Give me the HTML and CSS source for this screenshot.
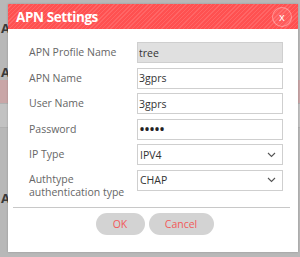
FILE: index.html
```html
<!DOCTYPE html>
<html lang="en">
<head>
    <meta charset="UTF-8">
    <meta name="viewport" content="width=device-width, initial-scale=1.0">
    <title>APN Settings</title>
    <link rel="stylesheet" href="styles.css">
</head>
<body>
    <!-- page behind the dialog, dimmed -->
    <div class="page">
        <h2 class="section-title">A</h2>
        <h2 class="section-title second">A</h2>
        <div class="table">
            <div class="table-row selected"></div>
            <div class="table-row"></div>
        </div>
        <h2 class="section-title third">A</h2>
    </div>

    <div class="modal">
        <div class="modal-header">
            <h1>APN Settings</h1>
            <button class="close-btn">x</button>
        </div>

        <div class="modal-body">
            <div class="form">
                <label>APN Profile Name</label>
                <input class="field" type="text" value="tree" disabled>

                <label>APN Name</label>
                <input class="field" type="text" value="3gprs">

                <label>User Name</label>
                <input class="field" type="text" value="3gprs">

                <label>Password</label>
                <input class="field" type="password" value="12345">

                <label>IP Type</label>
                <div class="field select">
                    <span>IPV4</span>
                    <svg width="9" height="6" viewBox="0 0 9 6"><path d="M1 1l3.5 3.5L8 1" fill="none" stroke="#555" stroke-width="1.1"/></svg>
                </div>

                <label>Authtype<br>authentication type</label>
                <div class="field select">
                    <span>CHAP</span>
                    <svg width="9" height="6" viewBox="0 0 9 6"><path d="M1 1l3.5 3.5L8 1" fill="none" stroke="#555" stroke-width="1.1"/></svg>
                </div>
            </div>

            <div class="divider"></div>

            <div class="actions">
                <button class="btn btn-ok">OK</button>
                <button class="btn btn-cancel">Cancel</button>
            </div>
        </div>
    </div>
</body>
</html>
```
FILE: styles.css
```css
* {
    box-sizing: border-box;
    margin: 0;
    padding: 0;
}

body {
    font-family: 'Open Sans', 'Noto Sans', sans-serif;
    background-color: #b8b8b8;
    width: 300px;
    height: 257px;
    overflow: hidden;
    position: relative;
}

/* Background page */
.page {
    padding-top: 20px;
}

.section-title {
    font-size: 13px;
    font-weight: bold;
    color: #3a3a3a;
    padding-left: 1px;
    line-height: 16px;
}

.section-title.second {
    margin-top: 28px;
}

.section-title.third {
    margin-top: 62px;
}

.table-row {
    height: 24px;
    background-color: #c2c2c2;
    border-bottom: 1px solid #b0b0b0;
}

.table-row.selected {
    background-color: #c9a6a7;
}

/* Dialog */
.modal {
    position: absolute;
    left: 8px;
    top: 4px;
    width: 290px;
    height: 248px;
    background-color: #fff;
    box-shadow: 0 0 2px rgba(0, 0, 0, 0.2);
}

.modal-header {
    height: 25px;
    display: flex;
    align-items: center;
    justify-content: space-between;
    padding: 0 6px 0 8px;
    background-color: #ff5151;
    background-image: repeating-linear-gradient(
        -45deg,
        rgba(255, 255, 255, 0.12) 0,
        rgba(255, 255, 255, 0.12) 1px,
        rgba(0, 0, 0, 0) 1px,
        rgba(0, 0, 0, 0) 3px
    );
}

.modal-header h1 {
    font-size: 13.5px;
    font-weight: bold;
    color: #fff;
    letter-spacing: -0.4px;
}

.close-btn {
    width: 20px;
    height: 20px;
    border-radius: 50%;
    border: 1px solid rgba(255, 255, 255, 0.35);
    background-color: rgba(255, 255, 255, 0.06);
    color: #fff;
    font-family: 'Open Sans', sans-serif;
    font-size: 11px;
    line-height: 16px;
    cursor: pointer;
}

.modal-body {
    padding-top: 13px;
}

.form {
    display: grid;
    grid-template-columns: 108px 146px;
    row-gap: 4.6px;
    padding-left: 21px;
}

.form label {
    font-size: 10.5px;
    color: #666;
    line-height: 13px;
    display: flex;
    align-items: center;
}

.form label:last-of-type {
    align-items: flex-start;
    padding-top: 3px;
    min-height: 30px;
}

.field {
    height: 21px;
    border: 1px solid #cfcfcf;
    background-color: #fff;
    font-family: 'Open Sans', sans-serif;
    font-size: 10.5px;
    color: #333;
    padding: 0 1px;
    outline: none;
}

.field:disabled {
    background-color: #e0e0e0;
    color: #333;
}

.field[type="password"] {
    font-size: 16px;
    letter-spacing: -1px;
    color: #222;
}

.select {
    display: flex;
    align-items: center;
    justify-content: space-between;
    padding: 0 6px 0 2px;
}

.divider {
    height: 1px;
    background-color: #c8c8c8;
    margin: 7px 8px 0 5px;
}

.actions {
    display: flex;
    justify-content: center;
    gap: 4px;
    margin-top: 5px;
    padding-left: 3px;
}

.btn {
    height: 22px;
    border: none;
    border-radius: 11px;
    background-color: #d3d3d3;
    color: #f25a5a;
    font-family: 'Open Sans', sans-serif;
    font-size: 10.5px;
    cursor: pointer;
}

.btn-ok {
    width: 49px;
}

.btn-cancel {
    width: 65px;
}
```
